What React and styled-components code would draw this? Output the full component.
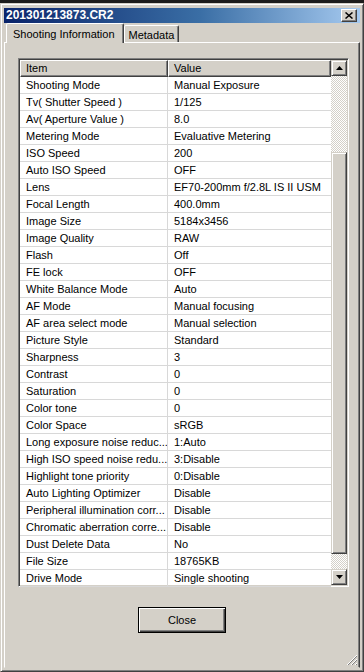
import React from 'react'
import styled, { createGlobalStyle } from 'styled-components'

const GlobalStyle = createGlobalStyle`
  html, body {
    margin: 0;
    padding: 0;
    background: #1c1c1c;
  }
  * { box-sizing: border-box; }
`

const rows = [
  ['Shooting Mode', 'Manual Exposure'],
  ['Tv( Shutter Speed )', '1/125'],
  ['Av( Aperture Value )', '8.0'],
  ['Metering Mode', 'Evaluative Metering'],
  ['ISO Speed', '200'],
  ['Auto ISO Speed', 'OFF'],
  ['Lens', 'EF70-200mm f/2.8L IS II USM'],
  ['Focal Length', '400.0mm'],
  ['Image Size', '5184x3456'],
  ['Image Quality', 'RAW'],
  ['Flash', 'Off'],
  ['FE lock', 'OFF'],
  ['White Balance Mode', 'Auto'],
  ['AF Mode', 'Manual focusing'],
  ['AF area select mode', 'Manual selection'],
  ['Picture Style', 'Standard'],
  ['Sharpness', '3'],
  ['Contrast', '0'],
  ['Saturation', '0'],
  ['Color tone', '0'],
  ['Color Space', 'sRGB'],
  ['Long exposure noise reduc...', '1:Auto'],
  ['High ISO speed noise redu...', '3:Disable'],
  ['Highlight tone priority', '0:Disable'],
  ['Auto Lighting Optimizer', 'Disable'],
  ['Peripheral illumination corr...', 'Disable'],
  ['Chromatic aberration corre...', 'Disable'],
  ['Dust Delete Data', 'No'],
  ['File Size', '18765KB'],
  ['Drive Mode', 'Single shooting'],
]

const Window = styled.div`
  margin-top: 3px;
  width: 364px;
  height: 669px;
  display: flex;
  flex-direction: column;
  background: #d4d0c8;
  border: 1px solid;
  border-color: #d4d0c8 #404040 #404040 #d4d0c8;
  box-shadow: inset 1px 1px #ffffff, inset -1px -1px #808080;
  padding: 4px 3px 3px 3px;
  font-family: "Liberation Sans", Arial, sans-serif;
  font-size: 11px;
  color: #000;
`

const TitleBar = styled.div`
  height: 15px;
  display: flex;
  align-items: center;
  justify-content: space-between;
  padding: 0 3px 0 2px;
  background: linear-gradient(to right, #0a246a 0%, #3a6ea5 55%, #a6caf0 100%);
`

const Title = styled.span`
  color: #fff;
  font-weight: bold;
  font-size: 12px;
  line-height: 15px;
`

const TitleButton = styled.div`
  width: 16px;
  height: 13px;
  display: flex;
  align-items: center;
  justify-content: center;
  background: #d4d0c8;
  border: 1px solid;
  border-color: #ffffff #404040 #404040 #ffffff;
  box-shadow: inset -1px -1px #808080;
`

const TabStrip = styled.div`
  display: flex;
  align-items: flex-end;
  height: 19px;
  padding-left: 2px;
`

const Tab = styled.div`
  height: ${p => (p.$active ? '20px' : '17px')};
  margin-bottom: ${p => (p.$active ? '-1px' : '0')};
  padding: ${p => (p.$active ? '1px 8px 0 6px' : '1px 4px 0 4px')};
  display: flex;
  align-items: center;
  background: #d4d0c8;
  border: 1px solid;
  border-bottom: none;
  border-color: #ffffff #404040 transparent #ffffff;
  box-shadow: inset -1px 0 #808080;
  border-radius: 2px 2px 0 0;
  position: relative;
  z-index: ${p => (p.$active ? 2 : 1)};
  font-size: 11px;
  line-height: 14px;
`

const Panel = styled.div`
  flex: 1;
  display: flex;
  flex-direction: column;
  align-items: center;
  border: 1px solid;
  border-color: #ffffff #404040 transparent #ffffff;
  box-shadow: inset -1px 0 #808080;
  padding: 15px 10px 0 13px;
  position: relative;
`

const List = styled.div`
  width: 331px;
  height: 529px;
  display: flex;
  border: 1px solid;
  border-color: #808080 #ffffff #ffffff #808080;
  box-shadow: inset 1px 1px #404040, inset -1px -1px #d4d0c8;
  padding: 1px;
  background: #fff;
`

const Table = styled.div`
  flex: 1;
  display: flex;
  flex-direction: column;
`

const Row = styled.div`
  display: grid;
  grid-template-columns: 148px 1fr;
  height: 17px;
`

const HeadCell = styled.div`
  height: 17px;
  padding: 1px 0 0 5px;
  background: #d4d0c8;
  border: 1px solid;
  border-color: #ffffff #404040 #404040 #ffffff;
  box-shadow: inset -1px -1px #808080;
  line-height: 13px;
  font-size: 11px;
`

const Cell = styled.div`
  height: 17px;
  padding: 1px 0 0 6px;
  line-height: 15px;
  font-size: 11px;
  white-space: nowrap;
  overflow: hidden;
  border-bottom: 1px solid #d8d8d8;
  border-right: ${p => (p.$first ? '1px solid #d8d8d8' : 'none')};
`

const ScrollBar = styled.div`
  width: 16px;
  display: flex;
  flex-direction: column;
`

const ScrollButton = styled.div`
  width: 16px;
  height: 16px;
  display: flex;
  align-items: center;
  justify-content: center;
  background: #d4d0c8;
  border: 1px solid;
  border-color: #d4d0c8 #404040 #404040 #d4d0c8;
  box-shadow: inset 1px 1px #ffffff, inset -1px -1px #808080;
`

const Track = styled.div`
  height: ${p => p.$h}px;
  background-color: #ffffff;
  background-image: repeating-conic-gradient(#d4d0c8 0 25%, #ffffff 0 50%);
  background-size: 2px 2px;
`

const Thumb = styled.div`
  flex: 1;
  background: #d4d0c8;
  border: 1px solid;
  border-color: #d4d0c8 #404040 #404040 #d4d0c8;
  box-shadow: inset 1px 1px #ffffff, inset -1px -1px #808080;
`

const ButtonRow = styled.div`
  margin-top: 20px;
  padding-right: 3px;
`

const Button = styled.button`
  width: 88px;
  height: 26px;
  font-family: "Liberation Sans", Arial, sans-serif;
  font-size: 11px;
  color: #000;
  background: #d4d0c8;
  border: 1px solid #000;
  box-shadow: inset 1px 1px #ffffff, inset -1px -1px #404040, inset -2px -2px #808080;
  padding: 0;
`

const Grip = styled.svg`
  position: absolute;
  right: 1px;
  bottom: 1px;
`

const Arrow = ({ down }) => (
  <svg width="7" height="4" viewBox="0 0 7 4">
    <path d={down ? 'M0 0H7L3.5 4Z' : 'M3.5 0L7 4H0Z'} fill="#000" />
  </svg>
)

export default function App() {
  return (
    <>
      <GlobalStyle />
      <Window>
        <TitleBar>
          <Title>201301213873.CR2</Title>
          <TitleButton>
            <svg width="8" height="7" viewBox="0 0 8 7">
              <path d="M0.5 0.5L7.5 6.5M7.5 0.5L0.5 6.5" stroke="#000" strokeWidth="1.5" />
            </svg>
          </TitleButton>
        </TitleBar>
        <TabStrip>
          <Tab $active>Shooting Information</Tab>
          <Tab>Metadata</Tab>
        </TabStrip>
        <Panel>
          <List>
            <Table>
              <Row>
                <HeadCell>Item</HeadCell>
                <HeadCell>Value</HeadCell>
              </Row>
              {rows.map(([item, value]) => (
                <Row key={item}>
                  <Cell $first>{item}</Cell>
                  <Cell>{value}</Cell>
                </Row>
              ))}
            </Table>
            <ScrollBar>
              <ScrollButton><Arrow /></ScrollButton>
              <Track $h={76} />
              <Thumb />
              <Track $h={15} />
              <ScrollButton><Arrow down /></ScrollButton>
            </ScrollBar>
          </List>
          <ButtonRow>
            <Button>Close</Button>
          </ButtonRow>
          <Grip width="12" height="12" viewBox="0 0 12 12">
            <path d="M11 1L1 11M11 5L5 11M11 9L9 11" stroke="#ffffff" strokeWidth="1" />
            <path d="M11 2L2 11M11 6L6 11M11 10L10 11" stroke="#808080" strokeWidth="1" />
          </Grip>
        </Panel>
      </Window>
    </>
  )
}
